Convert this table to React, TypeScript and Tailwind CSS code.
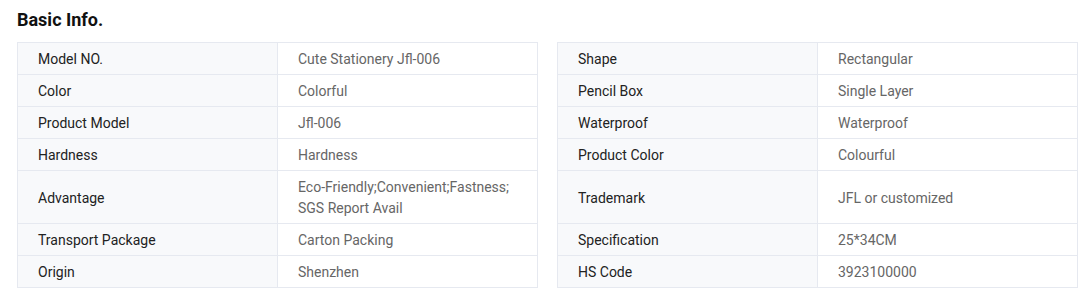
import React from "react";

const left: [string, string[]][] = [
  ["Model NO.", ["Cute Stationery Jfl-006"]],
  ["Color", ["Colorful"]],
  ["Product Model", ["Jfl-006"]],
  ["Hardness", ["Hardness"]],
  ["Advantage", ["Eco-Friendly;Convenient;Fastness;", "SGS Report Avail"]],
  ["Transport Package", ["Carton Packing"]],
  ["Origin", ["Shenzhen"]],
];
const right: [string, string[]][] = [
  ["Shape", ["Rectangular"]],
  ["Pencil Box", ["Single Layer"]],
  ["Waterproof", ["Waterproof"]],
  ["Product Color", ["Colourful"]],
  ["Trademark", ["JFL or customized"]],
  ["Specification", ["25*34CM"]],
  ["HS Code", ["3923100000"]],
];

const keyCls =
  "w-[260px] border border-[#e6e9f0] bg-[#f8f9fb] px-[20px] pt-[6px] pb-[4px] align-middle text-[14px] leading-[21px] text-[#222222]";
const valCls =
  "w-[260px] border border-[#e6e9f0] bg-white px-[20px] pt-[6px] pb-[4px] align-middle text-[14px] leading-[21px] text-[#666666]";

export default function App() {
  return (
    <div
      className="bg-white w-[1089px] h-[297px] px-[17px] pt-[8px]"
      style={{ fontFamily: "Roboto, 'Liberation Sans', sans-serif" }}
    >
      <h2 className="text-[18px] leading-[24px] font-bold text-[#111111]">Basic Info.</h2>
      <table className="mt-[10px] w-[1060px] border-collapse table-fixed">
        <tbody>
          {left.map(([k, v], i) => {
            const [rk, rv] = right[i];
            return (
              <tr key={k}>
                <td className={keyCls}>{k}</td>
                <td className={valCls}>
                  {v.map((line, j) => (
                    <div key={j}>{line}</div>
                  ))}
                </td>
                <td className="w-[20px] p-0"></td>
                <td className={keyCls}>{rk}</td>
                <td className={valCls}>
                  {rv.map((line, j) => (
                    <div key={j}>{line}</div>
                  ))}
                </td>
              </tr>
            );
          })}
        </tbody>
      </table>
    </div>
  );
}
